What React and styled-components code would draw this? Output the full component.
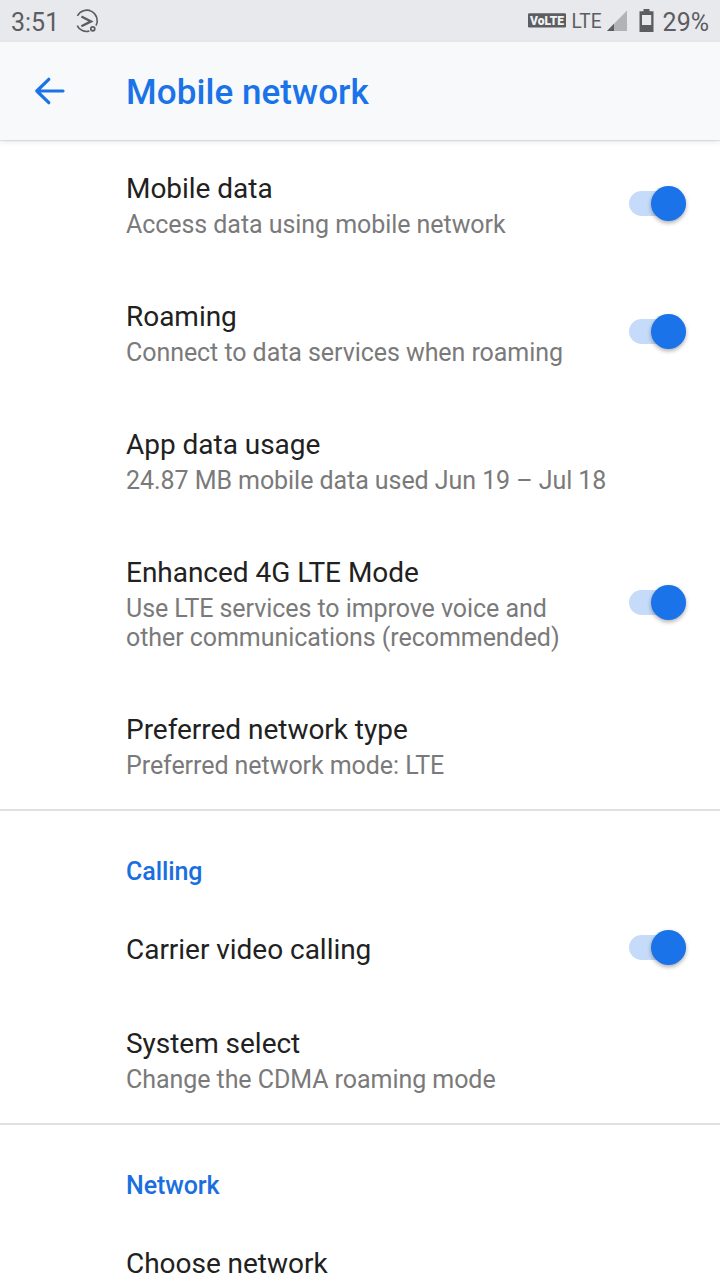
import React, { useState } from "react";
import styled, { createGlobalStyle } from "styled-components";

const GlobalStyle = createGlobalStyle`
  * {
    box-sizing: border-box;
  }
  body {
    margin: 0;
    background: #fff;
    font-family: Roboto, "Liberation Sans", sans-serif;
  }
`;

const Screen = styled.div`
  display: flex;
  flex-direction: column;
  width: 720px;
  height: 1280px;
  overflow: hidden;
  background: #fff;
`;

const StatusBar = styled.div`
  display: flex;
  flex: none;
  justify-content: space-between;
  align-items: center;
  height: 42px;
  padding: 0 11px;
  background: #e8e9ed;
  color: #5c5d61;
  font-size: 25px;
`;

const StatusGroup = styled.div`
  display: flex;
  align-items: center;
  gap: ${(props) => props.$gap};
  height: 42px;

  & svg {
    display: block;
    flex: none;
  }
`;

const StatusText = styled.span`
  line-height: 29px;
  padding-top: 3px;
`;

const AppBar = styled.header`
  display: flex;
  flex: none;
  align-items: center;
  height: 98px;
  padding-left: 28px;
  background: #f8f9fb;
  box-shadow: 0 1px 1px rgba(0, 0, 0, 0.09), 0 2px 6px rgba(0, 0, 0, 0.09);
  z-index: 1;
`;

const BackButton = styled.button`
  display: flex;
  width: 98px;
  padding: 0;
  border: none;
  background: none;
  cursor: pointer;
`;

const PageTitle = styled.h1`
  margin: 0;
  padding-top: 2px;
  color: #1a73e8;
  font-size: 35px;
  font-weight: 500;
  line-height: 41px;
  letter-spacing: 0.08px;
`;

const Section = styled.section`
  flex: none;
  border-bottom: 2px solid #dfe1e0;
`;

const SectionTitle = styled.h2`
  margin: 0;
  padding: 46px 0 15px 126px;
  color: #1a6fe0;
  font-size: 25px;
  font-weight: 500;
  line-height: 29px;
  letter-spacing: -0.08px;
`;

const Row = styled.div`
  display: flex;
  align-items: center;
  justify-content: space-between;
  min-height: 94px;
  padding: 32px 34px 29px 126px;
`;

const Label = styled.div`
  color: #212121;
  font-size: 28px;
  line-height: 33px;
  letter-spacing: -0.03px;
`;

const Summary = styled.div`
  max-width: 484px;
  margin-top: 5px;
  color: #7a7a7a;
  font-size: 25px;
  line-height: 29px;
  letter-spacing: -0.06px;
  white-space: pre-line;
`;

const Toggle = styled.button`
  display: flex;
  align-items: center;
  justify-content: ${(props) => (props.$on ? "flex-end" : "flex-start")};
  flex: none;
  width: 57px;
  height: 25px;
  margin-top: -4px;
  padding: 0;
  border: none;
  border-radius: 13px;
  background: ${(props) => (props.$on ? "#c5dbf9" : "#c4c4c4")};
  cursor: pointer;
`;

const Thumb = styled.span`
  flex: none;
  width: 35px;
  height: 35px;
  border-radius: 50%;
  background: ${(props) => (props.$on ? "#1a73e8" : "#fafafa")};
  box-shadow: 0 2px 4px rgba(0, 0, 0, 0.32);
`;

const Setting = ({ label, summary, toggle }) => {
  const [on, setOn] = useState(true);

  return (
    <Row>
      <div>
        <Label>{label}</Label>
        {summary && <Summary>{summary}</Summary>}
      </div>
      {toggle && (
        <Toggle $on={on} role="switch" aria-checked={on} aria-label={label} onClick={() => setOn(!on)}>
          <Thumb $on={on} />
        </Toggle>
      )}
    </Row>
  );
};

const RecorderIcon = () => (
  <svg width="26" height="42" viewBox="0 0 26 42" fill="none" stroke="#5c5d61">
    <path d="M3.4 15.8A10.2 10.2 0 1 1 22 25.6M3.2 25.6A10.2 10.2 0 0 0 15.4 31" strokeWidth="1.6" />
    <path d="M7.4 16.5L17 21.4L7.4 26.2" strokeWidth="2.4" />
    <circle cx="18.8" cy="28.8" r="2" strokeWidth="1.7" />
  </svg>
);

const SignalIcons = () => (
  <svg width="132" height="42" viewBox="524 0 132 42" fill="#5c5d61">
    <rect x="528" y="13.3" width="38" height="14.2" rx="1.2" />
    <text x="530" y="24.7" fill="#f1f2f4" fontSize="12" fontWeight="900" textLength="34" lengthAdjust="spacingAndGlyphs">
      VoLTE
    </text>
    <text x="571.5" y="27.5" fontSize="21" textLength="30" lengthAdjust="spacingAndGlyphs">
      LTE
    </text>
    <path d="M607 31L627 10.5V31Z" fill="#b2b3b6" />
    <path d="M607 31L614 23.8V31Z" />
    <path fillRule="evenodd" d="M643.5 9h6v2.3h4V32h-14V11.3h4zM642 15v10h9.2V15z" />
  </svg>
);

const App = () => {
  return (
    <Screen>
      <GlobalStyle />
      <StatusBar>
        <StatusGroup $gap="15px">
          <StatusText>3:51</StatusText>
          <RecorderIcon />
        </StatusGroup>
        <StatusGroup $gap="7px">
          <SignalIcons />
          <StatusText>29%</StatusText>
        </StatusGroup>
      </StatusBar>
      <AppBar>
        <BackButton aria-label="Navigate up">
          <svg width="44" height="44" viewBox="0 0 44 44" fill="none" stroke="#1a73e8" strokeWidth="3.2" strokeLinecap="round" strokeLinejoin="round">
            <path d="M35 22H8.8M20.8 10.3L8.8 22L20.8 33.7" />
          </svg>
        </BackButton>
        <PageTitle>Mobile network</PageTitle>
      </AppBar>
      <Section>
        <Setting label="Mobile data" summary="Access data using mobile network" toggle />
        <Setting label="Roaming" summary="Connect to data services when roaming" toggle />
        <Setting label="App data usage" summary="24.87 MB mobile data used Jun 19 – Jul 18" />
        <Setting
          label="Enhanced 4G LTE Mode"
          summary={"Use LTE services to improve voice and\nother communications (recommended)"}
          toggle
        />
        <Setting label="Preferred network type" summary="Preferred network mode: LTE" />
      </Section>
      <Section>
        <SectionTitle>Calling</SectionTitle>
        <Setting label="Carrier video calling" toggle />
        <Setting label="System select" summary="Change the CDMA roaming mode" />
      </Section>
      <Section>
        <SectionTitle>Network</SectionTitle>
        <Setting label="Choose network" />
      </Section>
    </Screen>
  );
};

export default App;
